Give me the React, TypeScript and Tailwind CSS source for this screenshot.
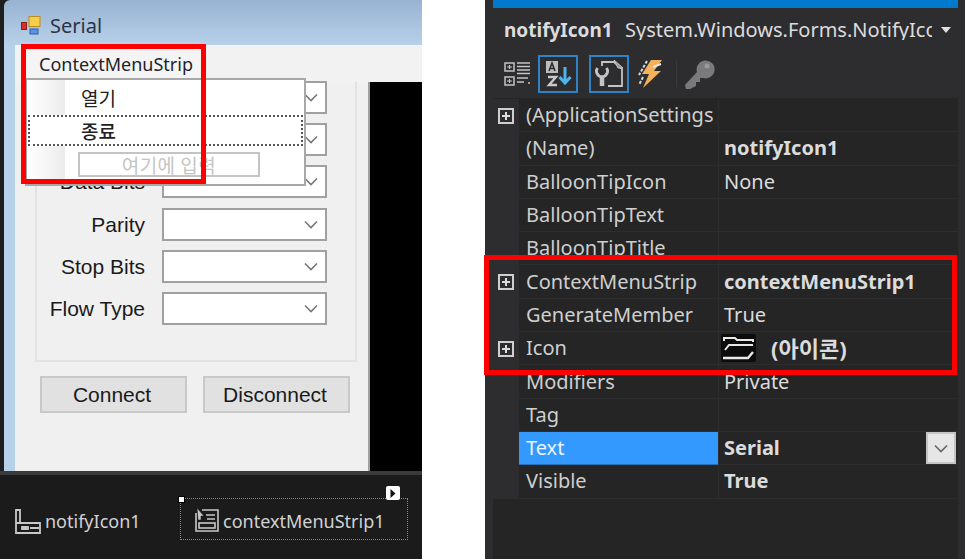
import React from "react";

const sans = "font-['Liberation_Sans',sans-serif]";
const ui = "font-['Noto_Sans','Noto_Sans_CJK_KR',sans-serif]";
const kr = "font-['Noto_Sans_CJK_KR',sans-serif]";

function Chevron({ className = "" }: { className?: string }) {
  return (
    <svg width="14" height="9" viewBox="0 0 14 9" className={className} fill="none" stroke="currentColor" strokeWidth="1.6">
      <path d="M1 1.5 L7 7.5 L13 1.5" />
    </svg>
  );
}

function Combo({ label }: { label: string }) {
  return (
    <div className="flex items-center h-[33px]">
      <div className="w-[108px] text-right text-[21px] leading-none text-[#1a1a1a]">{label}</div>
      <div className="ml-[17px] w-[165px] h-[33px] bg-white border-2 border-[#a0a0a0] flex items-center justify-end pr-[7px] text-[#777777]">
        <Chevron />
      </div>
    </div>
  );
}

function Plus() {
  return (
    <div className="w-[16px] h-[16px] border-2 border-[#cfcfcf] flex items-center justify-center relative">
      <div className="w-[8px] h-[2px] bg-[#dcdcdc] absolute" />
      <div className="w-[2px] h-[8px] bg-[#dcdcdc] absolute" />
    </div>
  );
}

function FolderIcon() {
  return (
    <svg width="35" height="28" viewBox="0 0 35 28">
      <rect width="35" height="28" fill="#0c0c0c" rx="2" />
      <path d="M3 7 V4 H14 L16 6 H32 V8" fill="none" stroke="#e8e8e8" strokeWidth="2" />
      <path d="M4 16 L8 11 H32" fill="none" stroke="#e8e8e8" strokeWidth="2" />
      <path d="M2 24 H27 L32 18" fill="none" stroke="#e8e8e8" strokeWidth="2.4" />
    </svg>
  );
}

type Row = { name: string; value?: string; bold?: boolean; plus?: boolean; selected?: boolean; icon?: boolean };

const rows: Row[] = [
  { name: "(ApplicationSettings", plus: true },
  { name: "(Name)", value: "notifyIcon1", bold: true },
  { name: "BalloonTipIcon", value: "None" },
  { name: "BalloonTipText" },
  { name: "BalloonTipTitle" },
  { name: "ContextMenuStrip", value: "contextMenuStrip1", bold: true, plus: true },
  { name: "GenerateMember", value: "True" },
  { name: "Icon", value: "(아이콘)", plus: true, icon: true, bold: true },
  { name: "Modifiers", value: "Private" },
  { name: "Tag" },
  { name: "Text", value: "Serial", bold: true, selected: true },
  { name: "Visible", value: "True", bold: true },
];

function PropRow({ r }: { r: Row }) {
  return (
    <div className="flex h-[33.3px] text-[20px] leading-none">
      <div className="w-[26px] shrink-0 bg-[#2d2d30] flex items-center justify-center">{r.plus && <Plus />}</div>
      <div
        className={`w-[199px] shrink-0 pl-[7px] flex items-center overflow-hidden whitespace-nowrap border-b ${
          r.selected ? "bg-[#3399ff] text-[#eaf4ff] border-[#2a6fb5]" : "text-[#cfcfcf] border-[#2d2d30]"
        }`}
      >
        {r.name}
      </div>
      <div className="w-px shrink-0 bg-[#2d2d30]" />
      <div className={`flex-1 pl-[5px] flex items-center whitespace-nowrap border-b border-[#2d2d30] text-[#dcdcdc] ${r.bold ? "font-bold" : ""}`}>
        {r.icon && (
          <span className="mr-[15px] -ml-[3px] flex">
            <FolderIcon />
          </span>
        )}
        <span className={r.icon ? "text-[22px]" : ""}>{r.value}</span>
        {r.selected && (
          <span className="ml-auto mr-[2px] w-[30px] h-[32px] bg-[#e6e6e6] border-2 border-[#c4c4c4] flex items-center justify-center text-[#666666]">
            <Chevron />
          </span>
        )}
      </div>
    </div>
  );
}

export default function App() {
  return (
    <div className={`w-[965px] h-[559px] bg-white flex overflow-hidden relative ${sans}`}>
      {/* Designer */}
      <div className="w-[422px] h-full flex flex-col relative shrink-0">
        <div className="h-[471px] flex bg-[#1e1e1e]">
          <div className="w-[4px] shrink-0" />
          <div className="flex-1 flex flex-col">
            <div className="h-[45px] bg-gradient-to-b from-[#98b3d1] to-[#b8d1ea] flex items-center pl-[17px] pt-[7px] rounded-tl-[6px]">
              <svg width="20" height="20" viewBox="0 0 20 20" className="mr-[9px]">
                <rect x="8" y="0.5" width="11" height="10" fill="#f5cf4a" stroke="#b98b20" />
                <rect x="0.5" y="6.5" width="5" height="7" fill="#d8322a" stroke="#8a1f18" />
                <rect x="9" y="13" width="8" height="5" fill="#5b93e6" stroke="#2f5fa8" />
              </svg>
              <span className={`text-[20px] leading-none text-[#2a3444] ${ui}`}>Serial</span>
            </div>
            <div className="flex-1 flex min-h-0">
              <div className="w-[11px] bg-[#b8d1ea]" />
              <div className="flex-1 flex flex-col min-w-0">
                <div className="h-[37px] bg-[#f2f2f2] shrink-0" />
                <div className="flex-1 flex min-h-0">
                  <div className="w-[353px] bg-[#f0f0f0] flex flex-col pl-[20px]">
                    <div className="w-[322px] h-[280px] border-2 border-t-0 border-[#e2e2e2] flex flex-col gap-[9.2px]">
                      <div className="h-0 -mb-[10.2px]" />
                      <Combo label="Port" />
                      <Combo label="Baud Rate" />
                      <Combo label="Data Bits" />
                      <Combo label="Parity" />
                      <Combo label="Stop Bits" />
                      <Combo label="Flow Type" />
                    </div>
                    <div className="flex gap-[16px] mt-[14px] ml-[5px]">
                      <div className="w-[147px] h-[37px] bg-[#e1e1e1] border-2 border-[#c8c8c8] flex items-center justify-center pr-[3px] text-[21px] text-[#1a1a1a]">Connect</div>
                      <div className="w-[147px] h-[37px] bg-[#e1e1e1] border-2 border-[#c8c8c8] flex items-center justify-center pr-[3px] text-[21px] text-[#1a1a1a]">Disconnect</div>
                    </div>
                  </div>
                  <div className="w-[2px] bg-[#a0a0a0]" />
                  <div className="flex-1 bg-black" />
                </div>
              </div>
            </div>
          </div>
        </div>

        {/* Component tray */}
        <div className={`flex-1 bg-[#1b1b1c] border-t-4 border-[#3a3a3c] flex items-start pt-[23px] pl-[15px] text-[#d2d2d2] text-[18px] leading-none ${ui}`}>
          <div className="flex items-center h-[42px] w-[165px]">
            <svg width="26" height="26" viewBox="0 0 26 26" fill="none" stroke="#c8c8c8" strokeWidth="1.8" className="mr-[4px] mt-[3px]">
              <path d="M1 2 H5 V15 H25 V25 H1 Z" />
              <path d="M1 15 H5 M7 19 H13 V21 H7 Z M15 20 H24" />
            </svg>
            <span className="relative top-[2px]">notifyIcon1</span>
          </div>
          <div className="relative w-[228px] h-[42px] border border-dotted border-[#8a8a8a] flex items-center pl-[14px]">
            <div className="absolute -left-[3px] -top-[3px] w-[7px] h-[7px] bg-white border border-black" />
            <div className="absolute right-[7px] -top-[13px] w-[14px] h-[14px] bg-white flex items-center justify-center rounded-[2px]">
              <svg width="6" height="9" viewBox="0 0 6 9"><path d="M0.5 0 L5.5 4.5 L0.5 9 Z" fill="#111" /></svg>
            </div>
            <svg width="24" height="24" viewBox="0 0 24 24" fill="none" stroke="#c8c8c8" strokeWidth="1.6" className="mr-[4px] mt-[2px]">
              <path d="M7 2 H23 V23 H1 V5" />
              <path d="M2 0 L9 8 H6 L6 12 H3 Z" fill="#c8c8c8" stroke="#1b1b1c" strokeWidth="0.6" />
              <path d="M11 7 H20 M12 11 H20" />
              <rect x="4" y="15" width="16" height="5" />
            </svg>
            <span className="relative top-[2px]">contextMenuStrip1</span>
          </div>
        </div>

        {/* Context menu editor, over the form */}
        <div className={`absolute left-[25px] top-[50px] w-[281px] ${ui}`}>
          <div className="w-[181px] h-[28px] bg-[#f4f4f4] border-r-2 border-[#b0b0b0] flex items-center pl-[14px] text-[18px] leading-none text-[#1f1f2e]">ContextMenuStrip</div>
          <div className={`h-[108px] bg-white border-2 border-[#a8a8a8] relative ${kr}`}>
            <div className="absolute left-0 top-0 bottom-0 w-[38px] bg-gradient-to-r from-white to-[#ececec]" />
            <div className="relative h-[35px] pl-[54px] flex items-center text-[19px] leading-none text-[#222222]">열기</div>
            <div className="relative h-[31px] mx-[1px] pl-[51px] flex items-center border-2 border-dotted border-[#555555] text-[19px] font-medium leading-none text-[#222222] bg-white">종료</div>
            <div className="relative mt-[6px] ml-[51px] w-[182px] h-[25px] border-2 border-[#c4c4c4] bg-white flex items-center justify-center text-[19px] tracking-[0.5px] leading-none text-[#c4c4c4] whitespace-nowrap">여기에 입력</div>
          </div>
        </div>
      </div>

      <div className="w-[63px] shrink-0" />

      {/* Properties */}
      <div className={`w-[480px] h-full shrink-0 bg-[#2d2d30] pl-[8px] pr-[7px] flex flex-col ${ui}`}>
        <div className="h-[8px] bg-[#007acc] shrink-0" />
        <div className="h-[42px] shrink-0 flex items-center pl-[11px] pt-[2px] text-[20px] leading-none text-[#dcdcdc] whitespace-nowrap">
          <span className="font-bold text-[19px] w-[121px] shrink-0">notifyIcon1</span>
          <span className="w-[307px] overflow-hidden shrink-0">System.Windows.Forms.NotifyIcon</span>
          <svg width="10" height="6" viewBox="0 0 10 6" className="ml-[9px]"><path d="M0 0 H10 L5 6 Z" fill="#e0e0e0" /></svg>
        </div>
        <div className="h-[48px] shrink-0 flex items-center relative">
          {/* categorized */}
          <svg width="28" height="28" viewBox="0 0 28 28" className="ml-[11px]" fill="none" stroke="#c4c4c4">
            <rect x="1" y="3" width="9" height="8" strokeWidth="1.5" />
            <path d="M3 7 H8 M5.5 5 V9" strokeWidth="1.2" />
            <rect x="1" y="17" width="9" height="8" strokeWidth="1.5" />
            <path d="M3 21 H8 M5.5 19 V23" strokeWidth="1.2" />
            <path d="M13 3 H26 M13 6.5 H26 M13 10 H26 M13 13.5 H26 M13 18 H24 M13 22 H20 M24 23 H26" strokeWidth="1.6" />
          </svg>
          <div className="ml-[6px] w-[40px] h-[38px] border-2 border-[#2f82c8] flex items-center justify-center">
            <svg width="28" height="30" viewBox="0 0 28 30">
              <rect x="2" y="2" width="12" height="12" fill="#bdbdbd" />
              <path d="M5 12 L8 4 L11 12 M6 9.5 H10" fill="none" stroke="#2d2d30" strokeWidth="1.6" />
              <path d="M4 18 H12 L5 26 H13" fill="none" stroke="#c8c8c8" strokeWidth="2.4" />
              <path d="M21 8 V23 M15.5 18 L21 24 L26.5 18" fill="none" stroke="#4fb4ee" strokeWidth="3" />
            </svg>
          </div>
          <div className="ml-[11px] w-[40px] h-[38px] border-2 border-[#2f82c8] flex items-center justify-center">
            <svg width="32" height="30" viewBox="0 0 32 30" fill="none" stroke="#c4c4c4" strokeWidth="1.8">
              <path d="M9 7 V3 H21 L29 10 V27 H15" />
              <path d="M21 1 L30 9 L25 9 Z" fill="#9a9a9a" strokeWidth="1" />
              <path d="M4.5 9 A5.5 5.5 0 1 0 13.5 9" strokeWidth="3" />
              <path d="M9 17 V27" strokeWidth="4.5" />
            </svg>
          </div>
          <svg width="26" height="30" viewBox="0 0 26 30" className="ml-[8px]">
            <path d="M14 1 H25 L17 12 H24 L6 29 L12 15 H5 Z" fill="#f2b25c" />
            <path d="M10 2 L2 16 M6 18 L2 26" stroke="#d8d8d8" strokeWidth="2" strokeDasharray="3 1.5" fill="none" />
            <path d="M16 8 L24 5" stroke="#e8e8e8" strokeWidth="2" />
          </svg>
          <div className="ml-[13px] w-px h-[26px] bg-[#3a3a3d]" />
          <svg width="32" height="32" viewBox="0 0 32 32" className="ml-[7px]">
            <path d="M1 27 L13 14 A9 9 0 1 1 19 20 L16 20 L16 24 L12 24 L12 28 L6 31 L2 31 Z" fill="#7a7a7a" />
            <circle cx="23" cy="8" r="2.5" fill="#9a9a9a" />
          </svg>
        </div>
        <div className="flex-1 bg-[#252526] min-h-0 pt-[1px]">
          {rows.map((r) => (
            <PropRow key={r.name} r={r} />
          ))}
        </div>
      </div>

      {/* Red highlight frames */}
      <div className="absolute left-[21px] top-[44px] w-[185px] h-[140px] border-[5px] border-[#ff0000] pointer-events-none" />
      <div className="absolute left-[484px] top-[255px] w-[473px] h-[120px] border-[5px] border-[#ff0000] pointer-events-none" />
    </div>
  );
}
